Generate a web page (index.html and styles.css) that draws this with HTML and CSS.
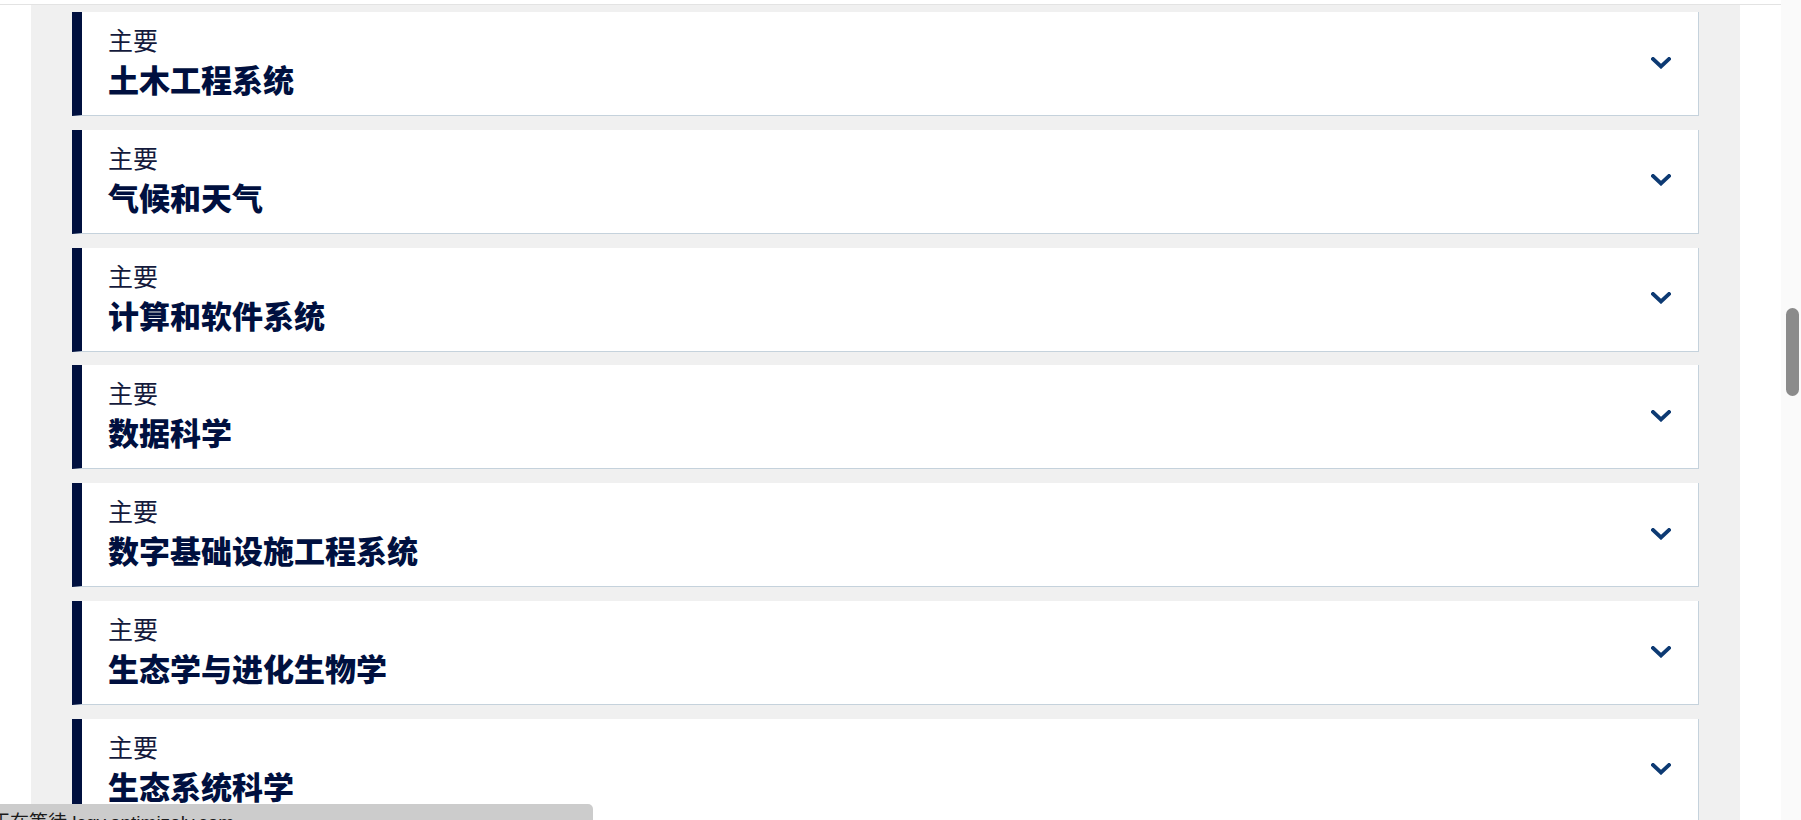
FILE: index.html
```html
<!DOCTYPE html>
<html lang="zh-CN">
<head>
<meta charset="utf-8">
<title>主要</title>
<link rel="stylesheet" href="styles.css">
</head>
<body>
<div class="page">
  <div class="main">
    <div class="topline"></div>
    <div class="row">
      <div class="gutter"></div>
      <div class="content">
        <div class="card"><div class="text"><div class="sub">主要</div><div class="title">土木工程系统</div></div><svg class="chev" viewBox="0 0 20 12"><path d="M2 2 L10 9.5 L18 2"/></svg></div>
        <div class="card"><div class="text"><div class="sub">主要</div><div class="title">气候和天气</div></div><svg class="chev" viewBox="0 0 20 12"><path d="M2 2 L10 9.5 L18 2"/></svg></div>
        <div class="card"><div class="text"><div class="sub">主要</div><div class="title">计算和软件系统</div></div><svg class="chev" viewBox="0 0 20 12"><path d="M2 2 L10 9.5 L18 2"/></svg></div>
        <div class="card"><div class="text"><div class="sub">主要</div><div class="title">数据科学</div></div><svg class="chev" viewBox="0 0 20 12"><path d="M2 2 L10 9.5 L18 2"/></svg></div>
        <div class="card"><div class="text"><div class="sub">主要</div><div class="title">数字基础设施工程系统</div></div><svg class="chev" viewBox="0 0 20 12"><path d="M2 2 L10 9.5 L18 2"/></svg></div>
        <div class="card"><div class="text"><div class="sub">主要</div><div class="title">生态学与进化生物学</div></div><svg class="chev" viewBox="0 0 20 12"><path d="M2 2 L10 9.5 L18 2"/></svg></div>
        <div class="card"><div class="text"><div class="sub">主要</div><div class="title">生态系统科学</div></div><svg class="chev" viewBox="0 0 20 12"><path d="M2 2 L10 9.5 L18 2"/></svg></div>
      </div>
      <div class="rightpad"></div>
    </div>
  </div>
  <div class="scrolltrack"><div class="thumb"></div></div>
</div>
<div class="status">正在等待 lcgy.optimizely.com</div>
</body>
</html>
```
FILE: styles.css
```css
html, body {
  margin: 0;
  padding: 0;
  height: 820px;
  overflow: hidden;
  background: #ffffff;
  font-family: "Noto Sans CJK SC", "Noto Sans", sans-serif;
}
.page {
  display: flex;
  height: 820px;
}
.main {
  flex: 1;
  display: flex;
  flex-direction: column;
  min-width: 0;
}
.topline {
  height: 4px;
  border-bottom: 1px solid #e3e3e3;
  flex: none;
}
.row {
  flex: 1;
  display: flex;
  min-height: 0;
}
.gutter {
  width: 31px;
  flex: none;
}
.content {
  width: 1709px;
  flex: none;
  background: #f0f0f0;
  padding: 7px 41px 0 41px;
  box-sizing: border-box;
  overflow: hidden;
}
.rightpad {
  flex: 1;
}
.card {
  position: relative;
  display: flex;
  align-items: flex-start;
  justify-content: space-between;
  height: 104px;
  box-sizing: border-box;
  background: #ffffff;
  border-left: 10px solid #00103f;
  border-right: 1px solid #c5d2dc;
  border-bottom: 1px solid #c5d2dc;
  margin-bottom: 13.83px;
  padding: 9px 27px 0 26px;
}
.text {
  display: flex;
  flex-direction: column;
}
.sub {
  font-size: 25px;
  line-height: 36px;
  color: #141a3c;
}
.title {
  font-size: 31px;
  line-height: 45px;
  font-weight: 900;
  color: #00103f;
  margin-top: -1px;
}
.chev {
  width: 20px;
  height: 12px;
  flex: none;
  align-self: center;
  margin-top: -11px;
}
.chev path {
  fill: none;
  stroke: #0d3a73;
  stroke-width: 3.8;
  stroke-linecap: square;
  stroke-linejoin: miter;
}
.scrolltrack {
  width: 20px;
  flex: none;
  background: #fafafa;
  position: relative;
}
.thumb {
  position: absolute;
  left: 5px;
  top: 308px;
  width: 13px;
  height: 88px;
  border-radius: 7px;
  background: #8b8b8b;
}
.status {
  position: absolute;
  left: 0;
  top: 804px;
  width: 593px;
  height: 30px;
  box-sizing: border-box;
  background: #cccccc;
  border-top-right-radius: 5px;
  padding: 7px 0 0 0;
  text-indent: -9px;
  font-family: "Liberation Sans", "Noto Sans CJK SC", sans-serif;
  font-size: 19px;
  line-height: 24px;
  color: #1a1a1a;
  white-space: nowrap;
  overflow: hidden;
}
```
